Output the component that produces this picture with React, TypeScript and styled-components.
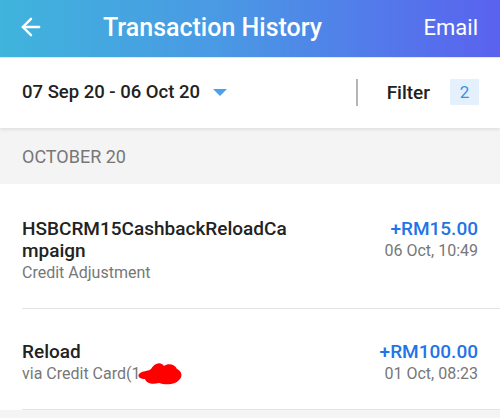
import React from "react";
import styled, { createGlobalStyle } from "styled-components";
import { ArrowLeft } from "lucide-react";

const GlobalStyle = createGlobalStyle`
  html, body {
    margin: 0;
    padding: 0;
    background: #f4f4f4;
    font-family: Roboto, "Noto Sans", Arial, sans-serif;
  }
`;

const Page = styled.div`
  width: 500px;
  height: 418px;
  overflow: hidden;
  background: #f4f4f4;
`;

const Header = styled.header`
  height: 57px;
  display: flex;
  align-items: center;
  padding: 0 22px 0 17px;
  background: linear-gradient(90deg, #3fb4dc 0%, #4a98e4 45%, #5a62ef 100%);
  color: #fff;
  border-bottom: 1px solid #dfe9f2;
`;

const BackBtn = styled.button`
  background: none;
  border: none;
  padding: 0;
  display: flex;
  color: #fff;
  width: 28px;
  margin-top: -4px;
`;

const Title = styled.h1`
  margin: -3px 0 0 58px;
  flex: 1;
  font-size: 25px;
  font-weight: 500;
  line-height: 1;
`;

const HeaderAction = styled.span`
  font-size: 22px;
  font-weight: 400;
  margin-top: -3px;
`;

const FilterBar = styled.div`
  height: 70px;
  display: flex;
  align-items: center;
  padding: 0 21px 2px 22px;
  box-sizing: border-box;
  background: #fff;
  box-shadow: 0 2px 3px rgba(0, 0, 0, 0.08);
  position: relative;
`;

const DateRange = styled.div`
  flex: 1;
  display: flex;
  align-items: center;
  gap: 13px;
  font-size: 18.5px;
  font-weight: 500;
  color: #222;
`;

const Caret = styled.span`
  width: 0;
  height: 0;
  border-left: 7px solid transparent;
  border-right: 7px solid transparent;
  border-top: 7px solid #4ba0ef;
  margin-top: 1px;
`;

const Divider = styled.span`
  width: 2px;
  height: 27px;
  background: #b5b5b5;
  margin-right: 29px;
`;

const FilterLabel = styled.span`
  font-size: 19px;
  font-weight: 500;
  color: #222;
  margin-right: 20px;
`;

const Badge = styled.span`
  width: 29px;
  height: 26px;
  display: flex;
  align-items: center;
  justify-content: center;
  background: #e4f1fd;
  color: #3b90e6;
  font-size: 17px;
`;

const SectionHeader = styled.div`
  height: 56px;
  display: flex;
  align-items: center;
  padding: 0 22px;
  font-size: 18px;
  color: #777;
  box-sizing: border-box;
`;

const List = styled.div`
  background: #fff;
  padding-left: 22px;
`;

const Row = styled.div<{ $top: number }>`
  display: flex;
  justify-content: space-between;
  padding: ${(p) => p.$top}px 22px 24px 0;
  border-bottom: 1px solid #e4e4e4;
`;

const Left = styled.div`
  width: 268px;
  display: flex;
  flex-direction: column;
`;

const Name = styled.div`
  font-size: 19px;
  font-weight: 500;
  line-height: 22px;
  color: #222;
  word-break: break-all;
`;

const Sub = styled.div`
  font-size: 16px;
  line-height: 22px;
  color: #777;
  position: relative;
`;

const Right = styled.div`
  display: flex;
  flex-direction: column;
  align-items: flex-end;
`;

const Amount = styled.div`
  font-size: 19px;
  font-weight: 500;
  line-height: 22px;
  color: #1f74e6;
`;

const When = styled.div`
  font-size: 16px;
  line-height: 22px;
  color: #777;
`;

const Scribble = styled.svg`
  position: absolute;
  left: 115px;
  top: -3px;
  width: 46px;
  height: 26px;
`;

export default function App() {
  return (
    <Page>
      <GlobalStyle />
      <Header>
        <BackBtn>
          <ArrowLeft size={28} strokeWidth={2.1} />
        </BackBtn>
        <Title>Transaction History</Title>
        <HeaderAction>Email</HeaderAction>
      </Header>
      <FilterBar>
        <DateRange>
          07 Sep 20 - 06 Oct 20
          <Caret />
        </DateRange>
        <Divider />
        <FilterLabel>Filter</FilterLabel>
        <Badge>2</Badge>
      </FilterBar>
      <SectionHeader>OCTOBER 20</SectionHeader>
      <List>
        <Row $top={34}>
          <Left>
            <Name>HSBCRM15CashbackReloadCampaign</Name>
            <Sub>Credit Adjustment</Sub>
          </Left>
          <Right>
            <Amount>+RM15.00</Amount>
            <When>06 Oct, 10:49</When>
          </Right>
        </Row>
        <Row $top={32}>
          <Left>
            <Name>Reload</Name>
            <Sub>
              via Credit Card(1
              <Scribble viewBox="0 0 46 26">
                <path
                  d="M2 14 C6 10 10 12 14 9 C17 3 24 1 27 6 C31 3 38 4 40 9 C45 11 46 17 42 20 C38 25 28 25 22 23 C15 25 9 23 8 19 C4 19 0 17 2 14 Z"
                  fill="#ff0000"
                />
              </Scribble>
            </Sub>
          </Left>
          <Right>
            <Amount>+RM100.00</Amount>
            <When>01 Oct, 08:23</When>
          </Right>
        </Row>
      </List>
    </Page>
  );
}
